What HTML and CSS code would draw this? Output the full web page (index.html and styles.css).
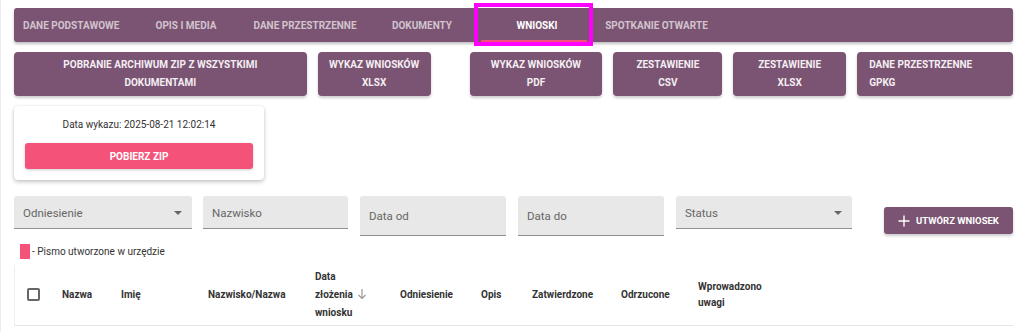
FILE: index.html
```html
<!DOCTYPE html>
<html lang="pl">
<head>
  <meta charset="UTF-8" />
  <meta name="viewport" content="width=device-width, initial-scale=1.0" />
  <title>Wnioski</title>
  <link rel="stylesheet" href="styles.css">
</head>
<body>
  <div class="page">
    <nav class="tabs">
      <a class="tab t-dane">Dane podstawowe</a>
      <a class="tab t-opis">Opis i media</a>
      <a class="tab t-przestrzenne">Dane przestrzenne</a>
      <a class="tab t-dokumenty">Dokumenty</a>
      <a class="tab t-wnioski active">Wnioski</a>
      <a class="tab t-spotkanie">Spotkanie otwarte</a>
      <span class="highlight"></span>
    </nav>

    <div class="downloads">
      <button class="dl-btn w-zip">Pobranie archiwum ZIP z wszystkimi<br>dokumentami</button>
      <button class="dl-btn w-xlsx">Wykaz wniosków<br>XLSX</button>
      <button class="dl-btn w-pdf">Wykaz wniosków<br>PDF</button>
      <button class="dl-btn w-csv">Zestawienie<br>CSV</button>
      <button class="dl-btn w-zxlsx">Zestawienie<br>XLSX</button>
      <button class="dl-btn w-gpkg left">Dane przestrzenne<br>GPKG</button>
    </div>

    <div class="zip-card">
      <p>Data wykazu: 2025-08-21 12:02:14</p>
      <button class="zip-btn">Pobierz ZIP</button>
    </div>

    <div class="filters">
      <div class="field f-odn select">Odniesienie <span class="caret"></span></div>
      <div class="field f-naz">Nazwisko</div>
      <div class="field f-date tall">Data od</div>
      <div class="field f-date tall">Data do</div>
      <div class="field f-status select">Status <span class="caret"></span></div>
      <button class="create-btn">
        <svg class="plus" viewBox="0 0 12 12" width="12" height="12"><path d="M6 0.5v11M0.5 6h11" stroke="#fff" stroke-width="1.4" fill="none"/></svg>
        Utwórz wniosek
      </button>
    </div>

    <div class="legend"><span class="swatch"></span> - Pismo utworzone w urzędzie</div>

    <div class="table-wrap">
      <table class="list">
        <thead>
          <tr>
            <th class="c-cb"><span class="checkbox"></span></th>
            <th class="c-nazwa">Nazwa</th>
            <th class="c-imie">Imię</th>
            <th class="c-nazwisko">Nazwisko/Nazwa</th>
            <th class="c-data">Data<br>złożenia <svg class="sort" viewBox="0 0 10 12" width="10" height="12"><path d="M5 1v9.5M1.5 7l3.5 3.5L8.5 7" stroke="#999" stroke-width="1.2" fill="none"/></svg><br>wniosku</th>
            <th class="c-odn">Odniesienie</th>
            <th class="c-opis">Opis</th>
            <th class="c-zatw">Zatwierdzone</th>
            <th class="c-odrz">Odrzucone</th>
            <th class="c-uwagi">Wprowadzono<br>uwagi</th>
          </tr>
        </thead>
      </table>
    </div>
  </div>
</body>
</html>
```

FILE: styles.css
```css
* {
  margin: 0;
  padding: 0;
  box-sizing: border-box;
}
body {
  font-family: Roboto, 'Noto Sans', sans-serif;
  background-color: #fff;
  color: #333;
}
.page {
  padding: 8px 11px 0 13px;
  border-left: 1px solid #ececec;
  min-height: 332px;
}

/* zakladki */
.tabs {
  position: relative;
  display: flex;
  height: 34px;
  background-color: #7a5472;
  border-radius: 3px;
  box-shadow: 0 2px 3px rgba(0, 0, 0, 0.25);
}
.tab {
  display: flex;
  align-items: center;
  justify-content: center;
  font-size: 10px;
  font-weight: 700;
  text-transform: uppercase;
  color: #d2c3ce;
  white-space: nowrap;
}
.t-dane { width: 123px; padding-left: 9px; justify-content: flex-start; }
.t-opis { width: 98px; }
.t-przestrzenne { width: 140px; }
.t-dokumenty { width: 94px; }
.t-wnioski { width: 106px; margin-left: 12px; padding-left: 6px; }
.t-spotkanie { width: 139px; }
.tab.active {
  color: #fff;
  border-bottom: 2px solid #f4507a;
  padding-top: 2px;
}
.highlight {
  position: absolute;
  left: 460px;
  top: -5px;
  width: 119px;
  height: 43px;
  border: 4px solid #ff00ff;
}

/* przyciski pobierania */
.downloads {
  display: flex;
  gap: 11px;
  margin-top: 10px;
}
.dl-btn {
  height: 44px;
  border: none;
  border-radius: 4px;
  background-color: #7a5472;
  color: #f4eef2;
  font-family: inherit;
  font-size: 10px;
  font-weight: 700;
  line-height: 18px;
  text-transform: uppercase;
  box-shadow: 0 2px 3px rgba(0, 0, 0, 0.2);
}
.dl-btn.left {
  text-align: left;
  padding-left: 12px;
}
.w-zip { width: 293px; }
.w-xlsx { width: 113px; }
.w-pdf { width: 133px; margin-left: 28px; }
.w-csv { width: 109px; }
.w-zxlsx { width: 113px; }
.w-gpkg { width: 156px; }

/* karta zip */
.zip-card {
  width: 250px;
  height: 74px;
  margin-top: 10px;
  padding: 12px 11px 0;
  border-radius: 4px;
  box-shadow: 0 2px 4px rgba(0, 0, 0, 0.22), 0 0 2px rgba(0, 0, 0, 0.08);
  text-align: center;
}
.zip-card p {
  font-size: 10px;
  line-height: 13px;
  color: #333;
}
.zip-btn {
  width: 100%;
  height: 26px;
  margin-top: 12px;
  border: none;
  border-radius: 3px;
  background-color: #f5527a;
  color: #fff;
  font-family: inherit;
  font-size: 10px;
  font-weight: 700;
  text-transform: uppercase;
  box-shadow: 0 1px 3px rgba(0, 0, 0, 0.2);
}

/* filtry */
.filters {
  display: flex;
  align-items: flex-start;
  gap: 12px;
  margin-top: 16px;
}
.field {
  position: relative;
  height: 33px;
  padding: 10px 9px 0;
  background-color: #e8e8e8;
  border-bottom: 1px solid #8f8f8f;
  border-radius: 3px 3px 0 0;
  font-size: 11.5px;
  color: #666;
}
.field.tall {
  height: 40px;
  padding-top: 13px;
}
.f-odn { width: 178px; }
.f-naz { width: 145px; margin-left: -1px; }
.f-date { width: 146px; }
.f-status { width: 176px; }
.caret {
  position: absolute;
  right: 10px;
  top: 15px;
  border-left: 4px solid transparent;
  border-right: 4px solid transparent;
  border-top: 4px solid #666;
}
.create-btn {
  display: flex;
  align-items: center;
  gap: 6px;
  width: 129px;
  height: 27px;
  margin-top: 11px;
  margin-left: 20px;
  padding-left: 14px;
  border: none;
  border-radius: 3px;
  background-color: #7a5472;
  color: #fff;
  font-family: inherit;
  font-size: 9.5px;
  font-weight: 700;
  text-transform: uppercase;
  box-shadow: 0 2px 3px rgba(0, 0, 0, 0.2);
}

.legend {
  display: flex;
  align-items: center;
  gap: 2px;
  margin-top: 8px;
  padding-left: 6px;
  font-size: 10px;
  color: #333;
}
.swatch {
  display: inline-block;
  width: 10px;
  height: 15px;
  background-color: #f5527a;
}

/* tabela */
.table-wrap {
  margin-top: 6px;
  border-left: 1px solid #eee;
}
.list {
  width: 100%;
  border-collapse: collapse;
}
.list th {
  height: 60px;
  padding: 0 0 0 16px;
  font-size: 10px;
  font-weight: 700;
  line-height: 18px;
  text-align: left;
  color: #333;
  border-bottom: 1px solid #e4e4e4;
}
.list th.c-cb { padding-left: 12px; width: 31px; }
.c-nazwa { width: 59px; }
.c-imie { width: 87px; }
.c-nazwisko { width: 107px; }
.c-data { width: 85px; }
.c-odn { width: 81px; }
.c-opis { width: 51px; }
.c-zatw { width: 89px; }
.c-odrz { width: 77px; }
.list th.c-uwagi { line-height: 16px; }
.checkbox {
  display: block;
  width: 13px;
  height: 13px;
  border: 2px solid #666;
  border-radius: 2px;
}
.sort {
  vertical-align: -2px;
  margin-left: 2px;
}
```
